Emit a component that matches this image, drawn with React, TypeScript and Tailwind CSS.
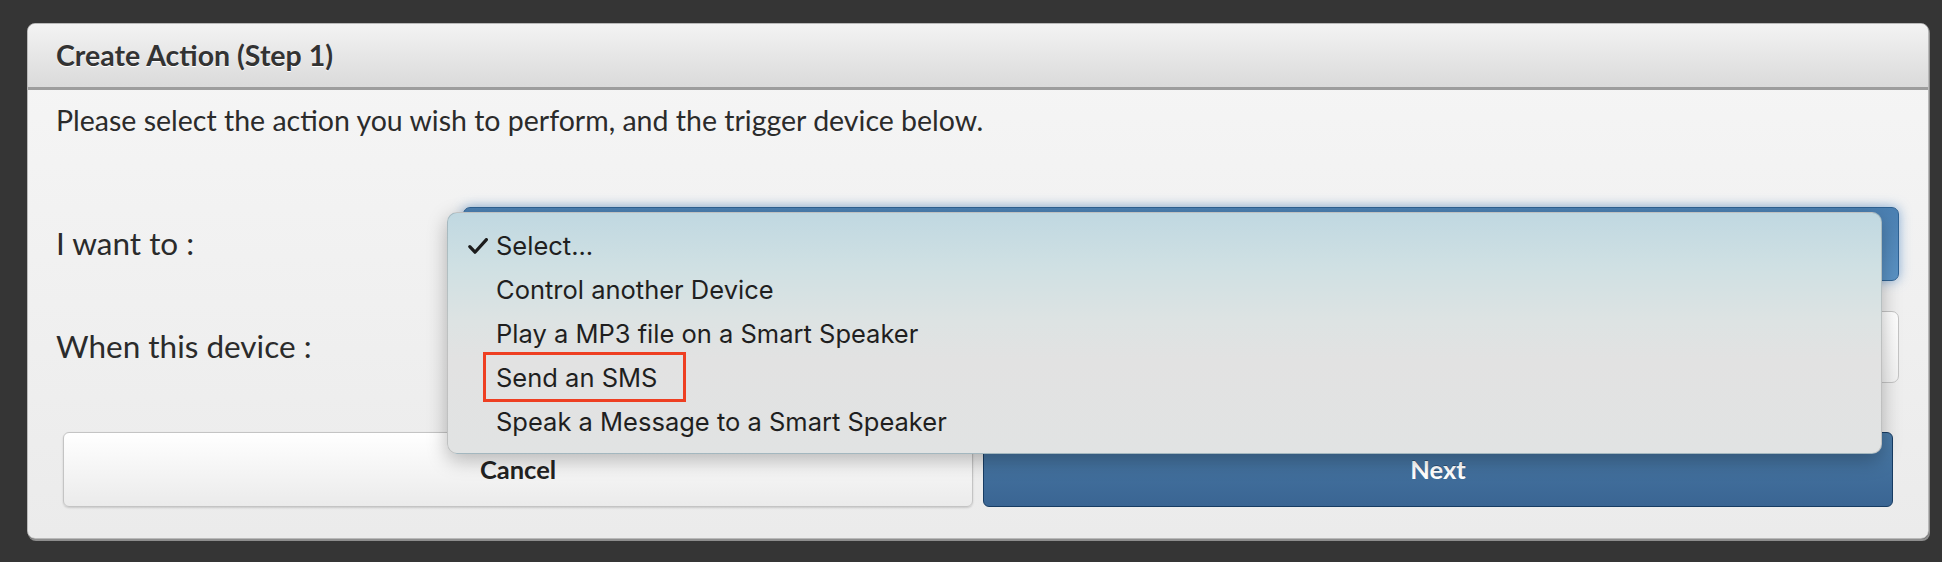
import React from "react";

const ITEMS = [
  "Select...",
  "Control another Device",
  "Play a MP3 file on a Smart Speaker",
  "Send an SMS",
  "Speak a Message to a Smart Speaker",
];

function Check() {
  return (
    <svg viewBox="0 0 20 16" className="h-[16px] w-[20px]" fill="none">
      <path d="M1.8 8.6L7 14.2L18.4 1.6" stroke="#1c1c1c" strokeWidth="3.2" strokeLinecap="round" strokeLinejoin="round" />
    </svg>
  );
}

export default function App() {
  return (
    <div className="h-[562px] w-full bg-[#353535] pl-[27px] pr-[13px] pt-[23px] font-['Lato',sans-serif]">
      <div className="relative h-[516px] rounded-[8px] border border-[#b9b9b9] bg-gradient-to-b from-[#f6f6f6] to-[#ebebeb] shadow-[1px_2px_0_#8e8e8e]">
        {/* header */}
        <div className="flex h-[66px] items-center rounded-t-[8px] border-b-[3px] border-[#9d9d9d] bg-gradient-to-b from-[#f3f3f3] to-[#dadada] px-[28px]">
          <h2 className="text-[28.5px] font-bold text-[#333] [text-shadow:0_1px_0_#fff]">Create Action (Step 1)</h2>
        </div>

        {/* body */}
        <div className="pl-[28px] pr-[29px] pt-[13px]">
          <p className="text-[28.5px] leading-[34px] text-[#2b2b2b]">Please select the action you wish to perform, and the trigger device below.</p>

          <div className="mt-[70px] grid grid-cols-[407px_1fr] items-center gap-y-[30px]">
            <label className="text-[31.5px] text-[#2b2b2b]">I want to :</label>
            <div className="h-[74px] rounded-[7px] border border-[#2f6293] bg-gradient-to-b from-[#4b80b2] to-[#5b93c5] shadow-[0_0_12px_rgba(74,134,196,0.65)]" />
            <label className="text-[31.5px] text-[#2b2b2b]">When this device :</label>
            <div className="h-[72px] rounded-[7px] border border-[#c5c5c5] bg-gradient-to-b from-[#ffffff] to-[#f2f2f2]" />
          </div>

          <div className="mt-[49px] flex gap-[10px] px-[7px] pr-[6px]">
            <button className="h-[75px] flex-1 rounded-[6px] border border-[#c4c4c4] bg-gradient-to-b from-[#ffffff] to-[#ebebeb] text-[25.5px] font-bold text-[#222] shadow-[0_1px_2px_rgba(0,0,0,0.15)]">
              Cancel
            </button>
            <button className="h-[75px] flex-1 rounded-[6px] border border-[#173c63] bg-gradient-to-b from-[#4a7aa6] to-[#3a6593] text-[25.5px] font-bold text-white [text-shadow:0_-1px_0_rgba(0,0,0,0.3)]">
              Next
            </button>
          </div>
        </div>

        {/* open native select menu */}
        <div className="absolute left-[419px] top-[188px] w-[1435px] rounded-[10px] border border-black/15 bg-[linear-gradient(180deg,#c0d8e1_0%,#cfe0e3_22%,#dde3e3_45%,#e2e2e2_62%,#e1e3e3_100%)] pb-[9px] pt-[11px] font-['Inter',sans-serif] shadow-[0_6px_20px_rgba(0,0,0,0.28)]">
          {ITEMS.map((it, i) => (
            <div key={it} className="relative flex h-[44px] items-center text-[25.5px] text-[#1f1f1f]">
              <span className="flex w-[48px] justify-end pr-[8px]">{i === 0 && <Check />}</span>
              <span className="relative">
                {it}
                {it === "Send an SMS" && <span className="absolute -top-[7px] left-[-13px] h-[50px] w-[203px] border-[3px] border-[#ee3f22]" />}
              </span>
            </div>
          ))}
        </div>
      </div>
    </div>
  );
}
